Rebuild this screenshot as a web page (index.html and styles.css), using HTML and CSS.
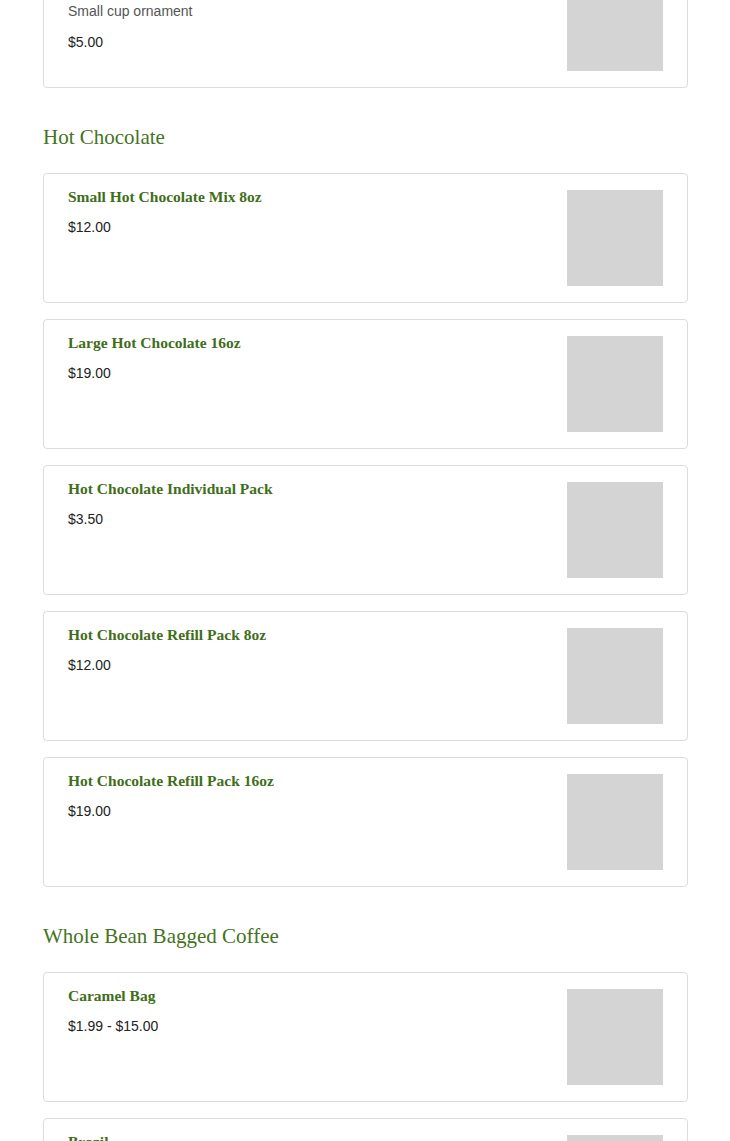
FILE: index.html
```html
<!DOCTYPE html>
<html>
<head>
<meta charset="utf-8">
<link rel="stylesheet" href="styles.css">
</head>
<body>
<main class="menu">
  <div class="card">
    <div class="info">
      <div class="title">Ornament</div>
      <div class="desc">Small cup ornament</div>
      <div class="price spaced">$5.00</div>
    </div>
    <div class="thumb"></div>
  </div>

  <h2 class="section">Hot Chocolate</h2>
  <div class="card">
    <div class="info"><div class="title">Small Hot Chocolate Mix 8oz</div><div class="price">$12.00</div></div>
    <div class="thumb"></div>
  </div>
  <div class="card">
    <div class="info"><div class="title">Large Hot Chocolate 16oz</div><div class="price">$19.00</div></div>
    <div class="thumb"></div>
  </div>
  <div class="card">
    <div class="info"><div class="title">Hot Chocolate Individual Pack</div><div class="price">$3.50</div></div>
    <div class="thumb"></div>
  </div>
  <div class="card">
    <div class="info"><div class="title">Hot Chocolate Refill Pack 8oz</div><div class="price">$12.00</div></div>
    <div class="thumb"></div>
  </div>
  <div class="card">
    <div class="info"><div class="title">Hot Chocolate Refill Pack 16oz</div><div class="price">$19.00</div></div>
    <div class="thumb"></div>
  </div>

  <h2 class="section">Whole Bean Bagged Coffee</h2>
  <div class="card">
    <div class="info"><div class="title">Caramel Bag</div><div class="price">$1.99 - $15.00</div></div>
    <div class="thumb"></div>
  </div>
  <div class="card">
    <div class="info"><div class="title">Brazil</div><div class="price">$1.99 - $15.00</div></div>
    <div class="thumb"></div>
  </div>
</main>
</body>
</html>
```
FILE: styles.css
```css
html, body {
  margin: 0;
  padding: 0;
  background: #ffffff;
}
body {
  font-family: "Liberation Sans", Arial, sans-serif;
  color: #222;
  overflow: hidden;
}
.menu {
  width: 645px;
  margin: -42px auto 0 43px;
  display: flex;
  flex-direction: column;
  gap: 16px;
}
.card {
  box-sizing: border-box;
  border: 1px solid #dcdcdc;
  border-radius: 4px;
  padding: 16px 24px;
  display: flex;
  justify-content: space-between;
  align-items: flex-start;
}
.info {
  display: flex;
  flex-direction: column;
  margin-top: -2px;
}
.title {
  font-family: "Liberation Serif", "Times New Roman", serif;
  font-weight: bold;
  font-size: 15.5px;
  line-height: 18px;
  color: #3f6e1a;
  margin-bottom: 11px;
}
.desc {
  font-size: 14px;
  line-height: 20px;
  color: #555;
  margin-top: -1px;
}
.price {
  font-size: 14px;
  line-height: 20px;
  color: #222;
}
.price.spaced {
  margin-top: 11px;
}
.thumb {
  width: 96px;
  height: 96px;
  background: #d4d4d4;
  flex: none;
}
.section {
  margin: 19px 0 6px;
  font-family: "Liberation Serif", "Times New Roman", serif;
  font-weight: normal;
  font-size: 21px;
  line-height: 28px;
  color: #45731f;
}
```
